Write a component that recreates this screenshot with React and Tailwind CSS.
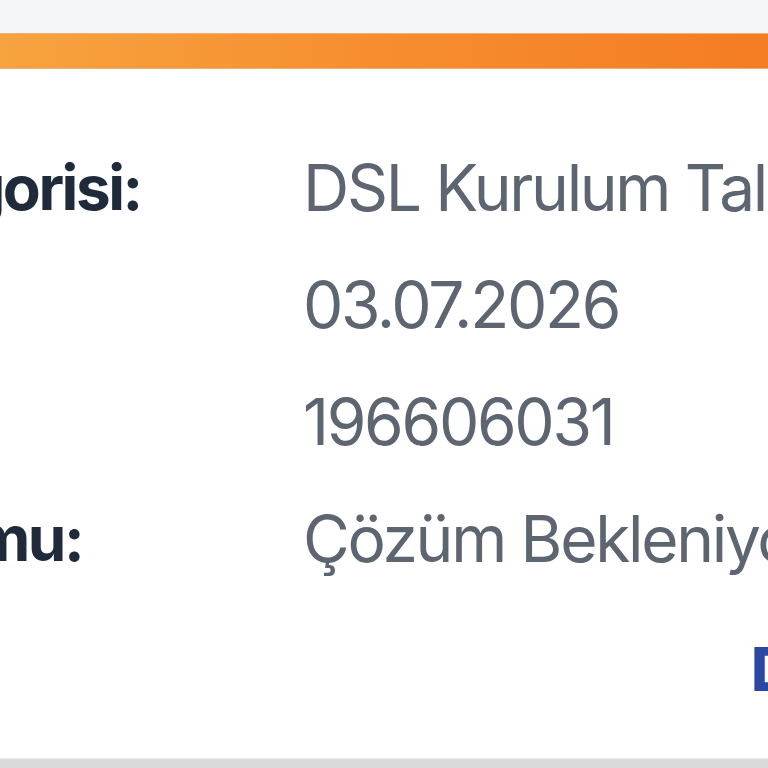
export default function App() {
  const rows = [
    { label: "Talep Kategorisi:", value: "DSL Kurulum Talebi" },
    { label: "Tarih:", value: "03.07.2026" },
    { label: "Talep No:", value: "196606031" },
    { label: "Talep Durumu:", value: "Çözüm Bekleniyor" },
  ];

  return (
    <div
      className="w-[768px] h-[768px] overflow-hidden bg-[#f4f5f7] flex flex-col"
      style={{ fontFamily: "Inter, 'Noto Sans', sans-serif" }}
    >
      <div className="h-[33px] shrink-0" />
      <div className="h-[36px] shrink-0 bg-gradient-to-r from-[#f7a33f] via-[#f68d2f] to-[#f47c22] border-y border-[#f0b070]" />
      <div className="flex-1 bg-white flex flex-col overflow-hidden">
        <div className="pt-[60px] ml-[-329px] grid grid-cols-[632px_1fr] whitespace-nowrap">
          {rows.map((r) => (
            <div key={r.label} className="contents">
              <div className="text-[62px] leading-[117px] font-bold text-[#1f2a3a] tracking-[-0.04em]">
                {r.label}
              </div>
              <div className="text-[64px] leading-[117px] font-normal text-[#5d6670] tracking-[-0.036em]">
                {r.value}
              </div>
            </div>
          ))}
        </div>
        <div className="pl-[751px] pt-[32px] whitespace-nowrap text-[60px] leading-[80px] font-extrabold text-[#2a48a3]">
          Detay
        </div>
      </div>
      <div className="h-[10px] shrink-0 bg-[#dadada] border-t border-[#ebebeb]" />
    </div>
  );
}
